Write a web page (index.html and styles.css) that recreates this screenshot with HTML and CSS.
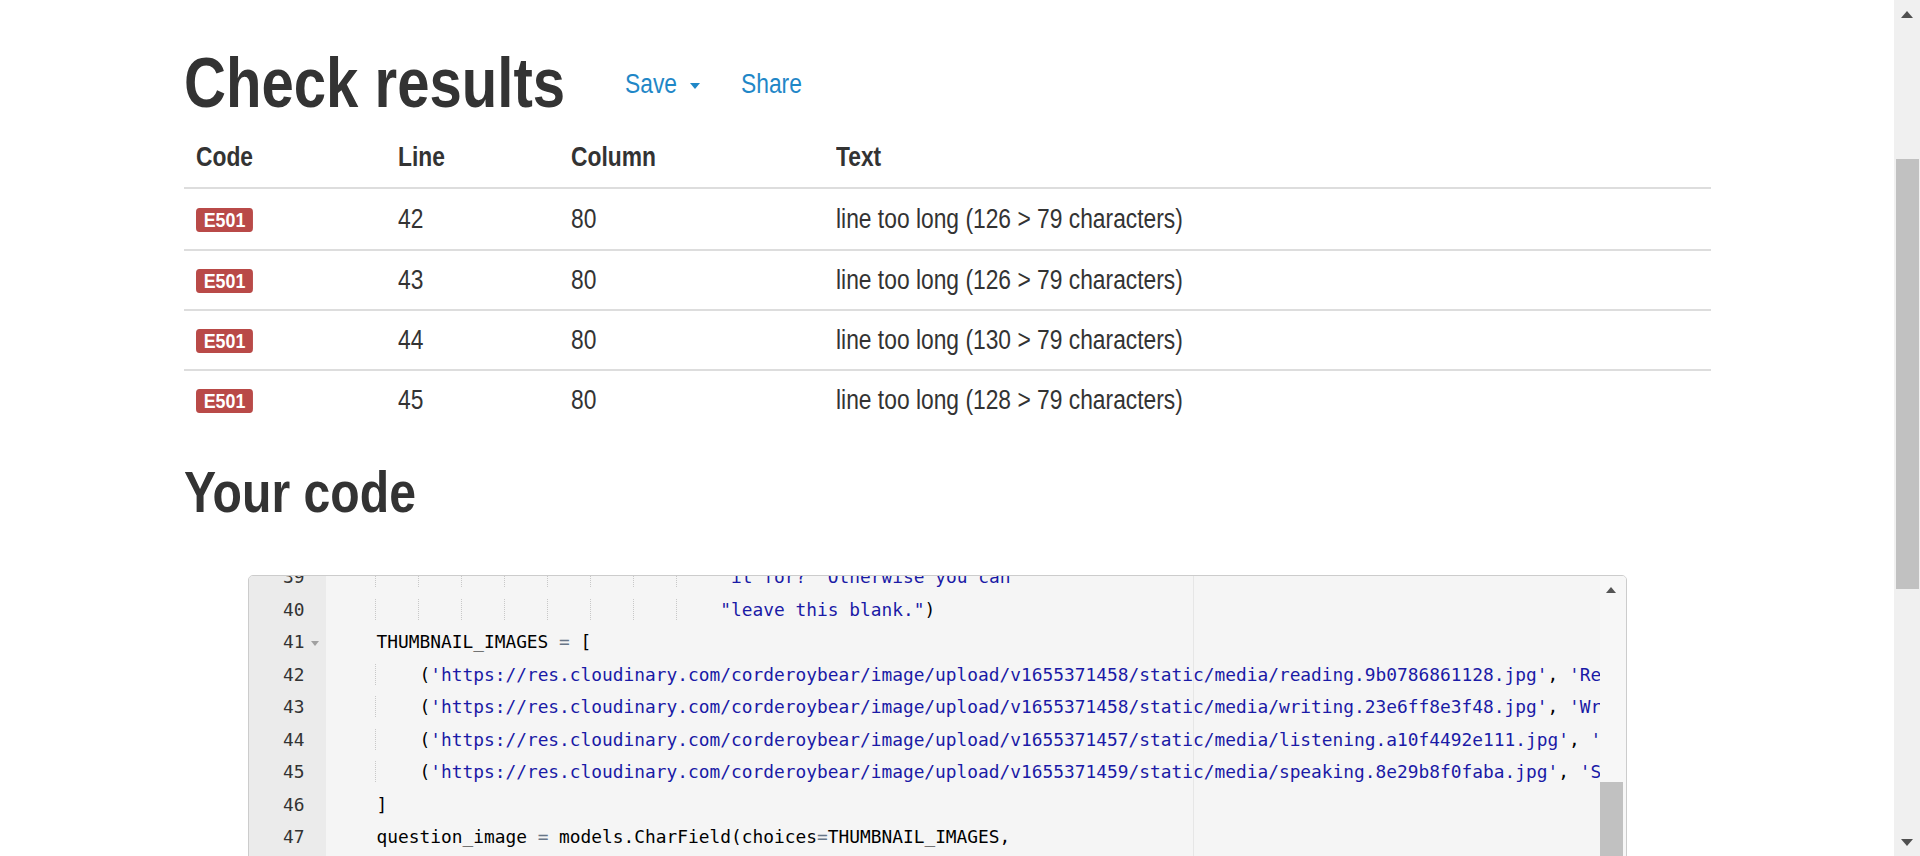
FILE: index.html
```html
<!DOCTYPE html>
<html lang="en">
<head>
<meta charset="utf-8">
<title>Check results</title>
<link rel="stylesheet" href="styles.css">
</head>
<body>
<div class="window">
  <main class="page">
    <div class="container">
      <div class="title-row">
        <h1><span class="sx-h1">Check results</span></h1>
        <nav class="actions">
          <a class="save" href="#"><span class="sx">Save</span><span class="caret"></span></a>
          <a class="share" href="#"><span class="sx">Share</span></a>
        </nav>
      </div>

      <table class="results">
        <colgroup>
          <col class="c-code"><col class="c-line"><col class="c-col"><col>
        </colgroup>
        <thead>
          <tr><th><span class="sx">Code</span></th><th><span class="sx">Line</span></th><th><span class="sx">Column</span></th><th><span class="sx">Text</span></th></tr>
        </thead>
        <tbody>
          <tr><td><span class="badge">E501</span></td><td><span class="sx">42</span></td><td><span class="sx">80</span></td><td><span class="sx">line too long (126 &gt; 79 characters)</span></td></tr>
          <tr><td><span class="badge">E501</span></td><td><span class="sx">43</span></td><td><span class="sx">80</span></td><td><span class="sx">line too long (126 &gt; 79 characters)</span></td></tr>
          <tr><td><span class="badge">E501</span></td><td><span class="sx">44</span></td><td><span class="sx">80</span></td><td><span class="sx">line too long (130 &gt; 79 characters)</span></td></tr>
          <tr><td><span class="badge">E501</span></td><td><span class="sx">45</span></td><td><span class="sx">80</span></td><td><span class="sx">line too long (128 &gt; 79 characters)</span></td></tr>
        </tbody>
      </table>

      <h2><span class="sx">Your code</span></h2>

      <div class="editor">
        <div class="gutter">
          <div class="gutter-lines">
            <div class="gl"><span>39</span><span class="fold"></span></div>
            <div class="gl"><span>40</span><span class="fold"></span></div>
            <div class="gl"><span>41</span><span class="fold"><i class="fold-arrow"></i></span></div>
            <div class="gl"><span>42</span><span class="fold"></span></div>
            <div class="gl"><span>43</span><span class="fold"></span></div>
            <div class="gl"><span>44</span><span class="fold"></span></div>
            <div class="gl"><span>45</span><span class="fold"></span></div>
            <div class="gl"><span>46</span><span class="fold"></span></div>
            <div class="gl"><span>47</span><span class="fold"></span></div>
          </div>
        </div>
        <div class="code">
          <div class="print-margin"></div>
          <div class="code-lines">
            <div class="ln"><span class="ig">    </span><span class="ig">    </span><span class="ig">    </span><span class="ig">    </span><span class="ig">    </span><span class="ig">    </span><span class="ig">    </span><span class="ig">    </span>    <span class="str">"it for?  Otherwise you can "</span></div>
            <div class="ln"><span class="ig">    </span><span class="ig">    </span><span class="ig">    </span><span class="ig">    </span><span class="ig">    </span><span class="ig">    </span><span class="ig">    </span><span class="ig">    </span>    <span class="str">"leave this blank."</span>)</div>
            <div class="ln">    THUMBNAIL_IMAGES <span class="op">=</span> [</div>
            <div class="ln"><span class="ig">    </span>    (<span class="str">'https://res.cloudinary.com/corderoybear/image/upload/v1655371458/static/media/reading.9b0786861128.jpg'</span>, <span class="str">'Reading'</span>),</div>
            <div class="ln"><span class="ig">    </span>    (<span class="str">'https://res.cloudinary.com/corderoybear/image/upload/v1655371458/static/media/writing.23e6ff8e3f48.jpg'</span>, <span class="str">'Writing'</span>),</div>
            <div class="ln"><span class="ig">    </span>    (<span class="str">'https://res.cloudinary.com/corderoybear/image/upload/v1655371457/static/media/listening.a10f4492e111.jpg'</span>, <span class="str">'Listening'</span>),</div>
            <div class="ln"><span class="ig">    </span>    (<span class="str">'https://res.cloudinary.com/corderoybear/image/upload/v1655371459/static/media/speaking.8e29b8f0faba.jpg'</span>, <span class="str">'Speaking'</span>),</div>
            <div class="ln">    ]</div>
            <div class="ln">    question_image <span class="op">=</span> models.CharField(choices<span class="op">=</span>THUMBNAIL_IMAGES,</div>
          </div>
        </div>
        <div class="vscroll">
          <div class="vs-btn"><i class="vs-up"></i></div>
          <div class="vs-thumb"></div>
        </div>
      </div>
    </div>
  </main>

  <div class="scrollbar">
    <div class="sb-btn"><i class="sb-up"></i></div>
    <div class="sb-track"><div class="sb-thumb"></div></div>
    <div class="sb-btn"><i class="sb-down"></i></div>
  </div>
</div>
</body>
</html>
```

FILE: styles.css
```css
* { box-sizing: border-box; }

html, body {
  margin: 0;
  padding: 0;
}

body {
  font-family: "Liberation Sans", Arial, sans-serif;
  color: #333;
  background: #fff;
}

/* Narrow rendering of the sans text (reference uses a condensed Arial look) */
.sx,
.sx-h1 {
  display: inline-block;
  transform-origin: 0 50%;
  transform: scaleX(0.845);
  white-space: nowrap;
}

.sx-h1 {
  transform: scaleX(0.83);
}

.window {
  display: flex;
  height: 856px;
  overflow: hidden;
}

.page {
  flex: 1;
  min-width: 0;
  overflow: hidden;
}

.container {
  width: 1527px;
  margin: 0 auto;
}

/* Title row */
.title-row {
  display: flex;
  align-items: flex-start;
  padding-top: 45px;
}

.title-row h1 {
  margin: 0;
  font-size: 70px;
  line-height: 77px;
  font-weight: 700;
  white-space: nowrap;
}

.actions {
  display: flex;
  margin-left: -17.5px;
  margin-top: 23px;
  font-size: 27px;
  line-height: 32px;
}

.actions a {
  color: #1f87c7;
  text-decoration: none;
  display: flex;
  align-items: center;
}

.caret {
  width: 0;
  height: 0;
  border-left: 5.5px solid transparent;
  border-right: 5.5px solid transparent;
  border-top: 6px solid #1f87c7;
  margin-left: 3px;
  margin-top: 3px;
}

.actions .share {
  margin-left: 41px;
}

/* Results table */
.results {
  width: 100%;
  border-collapse: separate;
  border-spacing: 0;
  table-layout: fixed;
  margin-top: 5px;
  font-size: 27px;
}

.c-code { width: 202px; }
.c-line { width: 173px; }
.c-col { width: 265px; }

.results th {
  text-align: left;
  font-weight: 700;
  line-height: 60px;
  padding: 0 12px;
  border-bottom: 2px solid #ddd;
}

.results td {
  line-height: 60px;
  padding: 0 12px;
  vertical-align: middle;
}

.results tbody tr + tr td {
  border-top: 2px solid #ddd;
  line-height: 58px;
}

.badge {
  display: inline-block;
  vertical-align: middle;
  background: #b94a48;
  color: #fff;
  font-size: 21px;
  font-weight: 700;
  line-height: 24px;
  padding: 0 9px;
  border-radius: 4px;
  margin-top: -2px;
  transform-origin: 0 50%;
  transform: scaleX(0.85);
}

h2 {
  margin: 32px 0 0;
  font-size: 57px;
  line-height: 63px;
  font-weight: 700;
}

/* Code editor */
.editor {
  margin: 51px 0 0 64px;
  width: 1379px;
  height: 320px;
  border: 1px solid #ccc;
  border-radius: 5px;
  display: flex;
  overflow: hidden;
  background: #f5f5f5;
  font-family: "DejaVu Sans Mono", "Liberation Mono", monospace;
  font-size: 17.85px;
}

.gutter {
  width: 77px;
  flex: none;
  background: #ebebeb;
  color: #333;
}

.gutter-lines,
.code-lines {
  margin-top: -15px;
}

.gl {
  display: flex;
  justify-content: flex-end;
  height: 32.5px;
  line-height: 32.5px;
}

.fold {
  width: 21px;
  display: flex;
  align-items: center;
  justify-content: center;
}

.fold-arrow {
  width: 0;
  height: 0;
  border-left: 4px solid transparent;
  border-right: 4px solid transparent;
  border-top: 5px solid #a0a0a0;
  margin-top: 2px;
}

.code {
  flex: 1;
  min-width: 0;
  position: relative;
  overflow: hidden;
  padding-left: 8px;
  color: #000;
}

.print-margin {
  position: absolute;
  top: 0;
  bottom: 0;
  left: calc(8px + 80ch);
  width: 1px;
  background: #e6e6e6;
}

.code-lines {
  position: relative;
}

.ln {
  height: 32.5px;
  line-height: 32.5px;
  white-space: pre;
}

.ig {
  background-image: linear-gradient(to bottom, #c8c8c8 50%, transparent 50%);
  background-size: 1px 2px;
  background-position: right top;
  background-repeat: repeat-y;
}

.str { color: #1a1aa6; }
.op { color: #687687; }

.vscroll {
  width: 26px;
  flex: none;
  background: #f7f7f7;
  display: flex;
  flex-direction: column;
}

.vs-btn {
  width: 23px;
  height: 30px;
  display: flex;
  align-items: center;
  justify-content: center;
}

.vs-up {
  width: 0;
  height: 0;
  border-left: 5px solid transparent;
  border-right: 5px solid transparent;
  border-bottom: 6px solid #555;
}

.vs-thumb {
  width: 23px;
  height: 120px;
  margin-top: 178px;
  background: #c1c1c1;
}

/* Browser scrollbar */
.scrollbar {
  width: 26px;
  flex: none;
  background: #f0f0f0;
  display: flex;
  flex-direction: column;
}

.sb-btn {
  height: 28px;
  flex: none;
  display: flex;
  align-items: center;
  justify-content: center;
}

.sb-up,
.sb-down {
  width: 0;
  height: 0;
  border-left: 6.5px solid transparent;
  border-right: 6.5px solid transparent;
}

.sb-up { border-bottom: 7px solid #505050; }
.sb-down { border-top: 7px solid #505050; }

.sb-track {
  flex: 1;
}

.sb-thumb {
  margin: 131px 1px 0 2px;
  height: 430px;
  background: #c1c1c1;
}
```
